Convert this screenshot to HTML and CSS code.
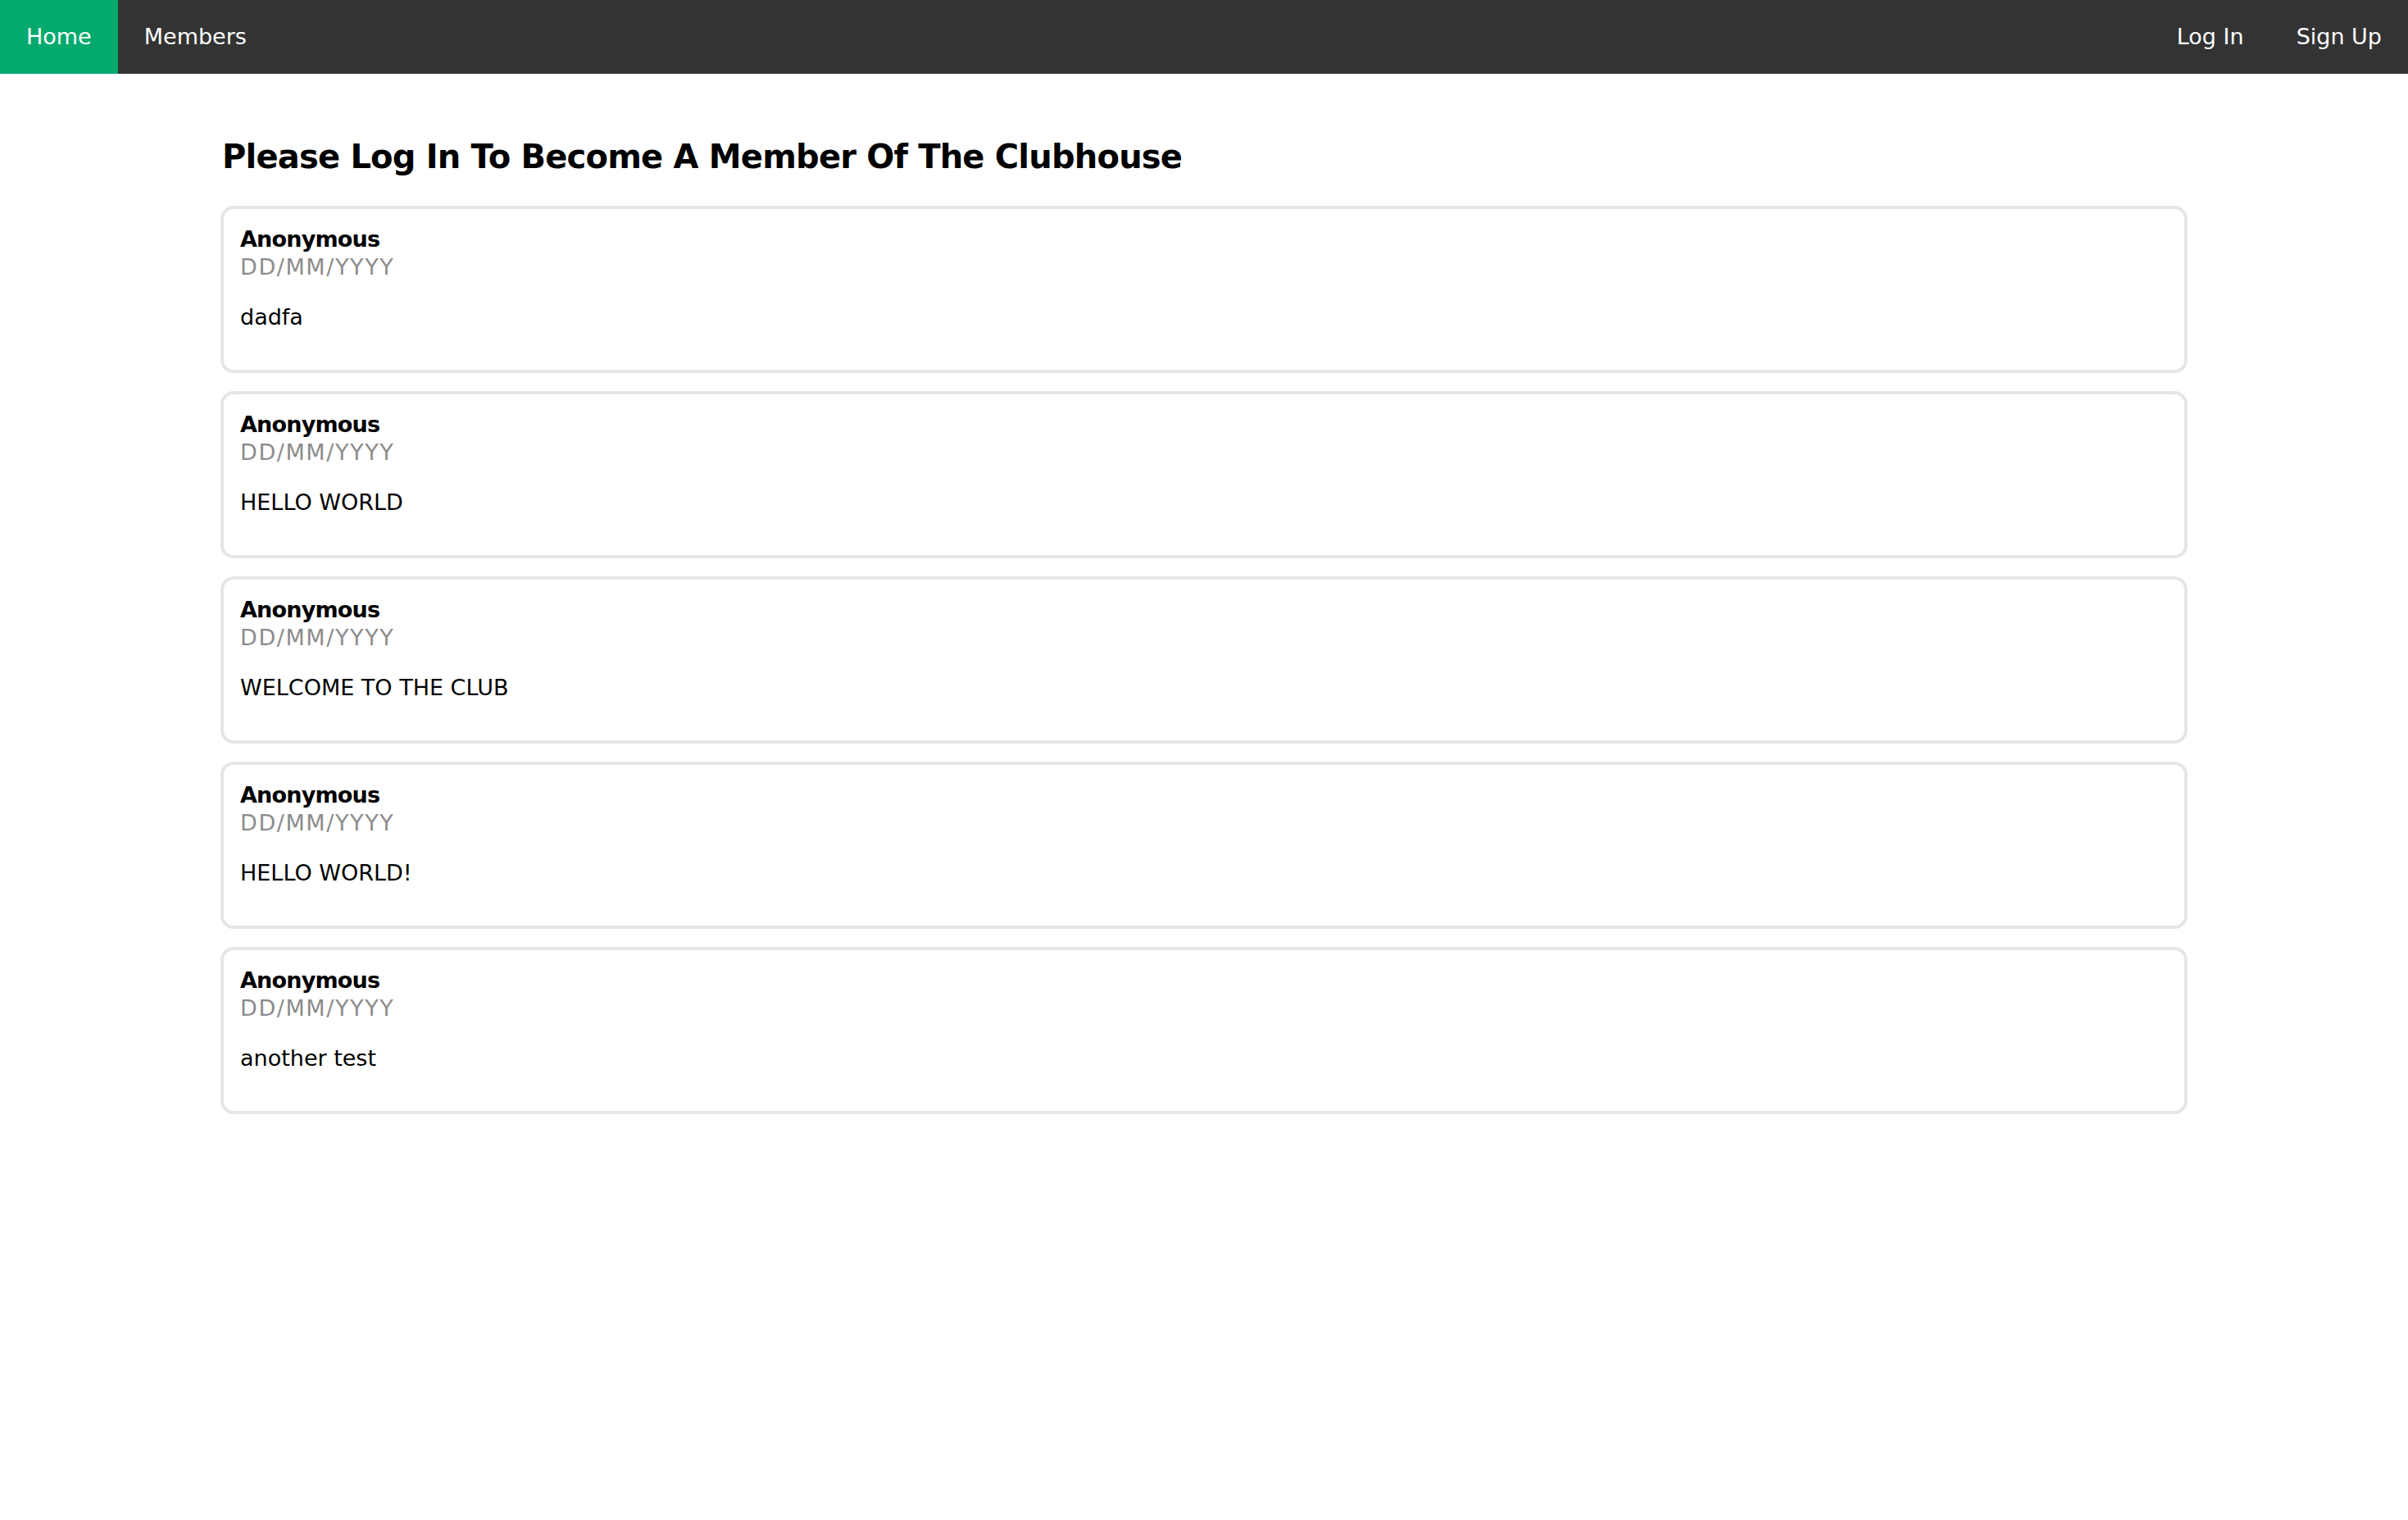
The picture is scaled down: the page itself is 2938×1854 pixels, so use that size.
FILE: index.html
```html
<!DOCTYPE html>
<html lang="en">
<head>
<meta charset="utf-8">
<title>Clubhouse</title>
<link rel="stylesheet" href="styles.css">
</head>
<body>
<nav class="topnav">
  <a class="nav-link active" href="#">Home</a>
  <a class="nav-link" href="#">Members</a>
  <div class="nav-right">
    <a class="nav-link" href="#">Log In</a>
    <a class="nav-link" href="#">Sign Up</a>
  </div>
</nav>
<main class="container">
  <h1 class="page-title">Please Log In To Become A Member Of The Clubhouse</h1>
  <div class="message-list">
    <div class="message">
      <div class="author">Anonymous</div>
      <div class="date">DD/MM/YYYY</div>
      <p class="text">dadfa</p>
    </div>
    <div class="message">
      <div class="author">Anonymous</div>
      <div class="date">DD/MM/YYYY</div>
      <p class="text">HELLO WORLD</p>
    </div>
    <div class="message">
      <div class="author">Anonymous</div>
      <div class="date">DD/MM/YYYY</div>
      <p class="text">WELCOME TO THE CLUB</p>
    </div>
    <div class="message">
      <div class="author">Anonymous</div>
      <div class="date">DD/MM/YYYY</div>
      <p class="text">HELLO WORLD!</p>
    </div>
    <div class="message">
      <div class="author">Anonymous</div>
      <div class="date">DD/MM/YYYY</div>
      <p class="text">another test</p>
    </div>
  </div>
</main>
</body>
</html>
```
FILE: styles.css
```css
* { box-sizing: border-box; }

body {
  margin: 0;
  background: #ffffff;
  color: #000000;
  font-family: "DejaVu Sans", "Liberation Sans", sans-serif;
}

.topnav {
  display: flex;
  align-items: stretch;
  height: 90px;
  background: #333333;
}

.nav-link {
  display: block;
  padding: 28px 32px;
  font-size: 27px;
  line-height: 34px;
  color: #ffffff;
  text-decoration: none;
}

.nav-link.active {
  background: #04aa6d;
}

.nav-right {
  display: flex;
  margin-left: auto;
}

.container {
  width: 2400px;
  margin: 0 auto;
}

.page-title {
  margin: 76px 0 35px 2px;
  font-size: 40px;
  line-height: 50px;
  letter-spacing: -0.8px;
  font-weight: bold;
}

.message-list {
  display: flex;
  flex-direction: column;
  gap: 22px;
}

.message {
  border: 4px solid #e6e6e6;
  border-radius: 16px;
  padding: 20px 20px;
  font-size: 27px;
  line-height: 34px;
}

.author {
  font-weight: bold;
  letter-spacing: -0.8px;
}

.date {
  color: #8c8c8c;
  letter-spacing: 1.6px;
}

.text {
  margin: 27px 0;
}
```
